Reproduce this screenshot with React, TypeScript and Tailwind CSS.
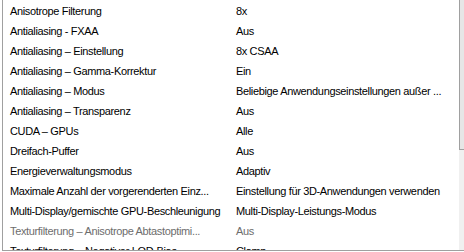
const rows: { name: string; value: string; disabled?: boolean }[] = [
  { name: 'Anisotrope Filterung', value: '8x' },
  { name: 'Antialiasing - FXAA', value: 'Aus' },
  { name: 'Antialiasing – Einstellung', value: '8x CSAA' },
  { name: 'Antialiasing – Gamma-Korrektur', value: 'Ein' },
  { name: 'Antialiasing – Modus', value: 'Beliebige Anwendungseinstellungen außer ...' },
  { name: 'Antialiasing – Transparenz', value: 'Aus' },
  { name: 'CUDA – GPUs', value: 'Alle' },
  { name: 'Dreifach-Puffer', value: 'Aus' },
  { name: 'Energieverwaltungsmodus', value: 'Adaptiv' },
  { name: 'Maximale Anzahl der vorgerenderten Einz...', value: 'Einstellung für 3D-Anwendungen verwenden' },
  { name: 'Multi-Display/gemischte GPU-Beschleunigung', value: 'Multi-Display-Leistungs-Modus' },
  { name: 'Texturfilterung – Anisotrope Abtastoptimi...', value: 'Aus', disabled: true },
  { name: 'Texturfilterung – Negativer LOD-Bias', value: 'Clamp' },
];

export default function App() {
  return (
    <div className="w-[464px] h-[252px] overflow-hidden bg-white font-['Liberation_Sans',Arial,sans-serif] text-[11px] tracking-[-0.35px] text-black">
      <div className="flex h-[251px] ml-[2px] border-l border-b border-[#a0a0a0]">
        {/* settings list */}
        <div className="flex-1 overflow-hidden pt-[1px]">
          {rows.map((r) => (
            <div
              key={r.name}
              className={`flex h-[20px] items-center ${r.disabled ? 'text-[#6d6d6d]' : ''}`}
            >
              <div className="w-[226px] pl-[7px] whitespace-nowrap overflow-hidden">{r.name}</div>
              <div className="w-[224px] pl-[7px] whitespace-nowrap overflow-hidden">{r.value}</div>
            </div>
          ))}
        </div>
        {/* scrollbar */}
        <div className="w-[5px] flex flex-col bg-[#f0f0f0]">
          <div className="h-[150px] border-l border-b border-[#a0a0a0] bg-[#e6e6e6]" />
        </div>
      </div>
    </div>
  );
}
